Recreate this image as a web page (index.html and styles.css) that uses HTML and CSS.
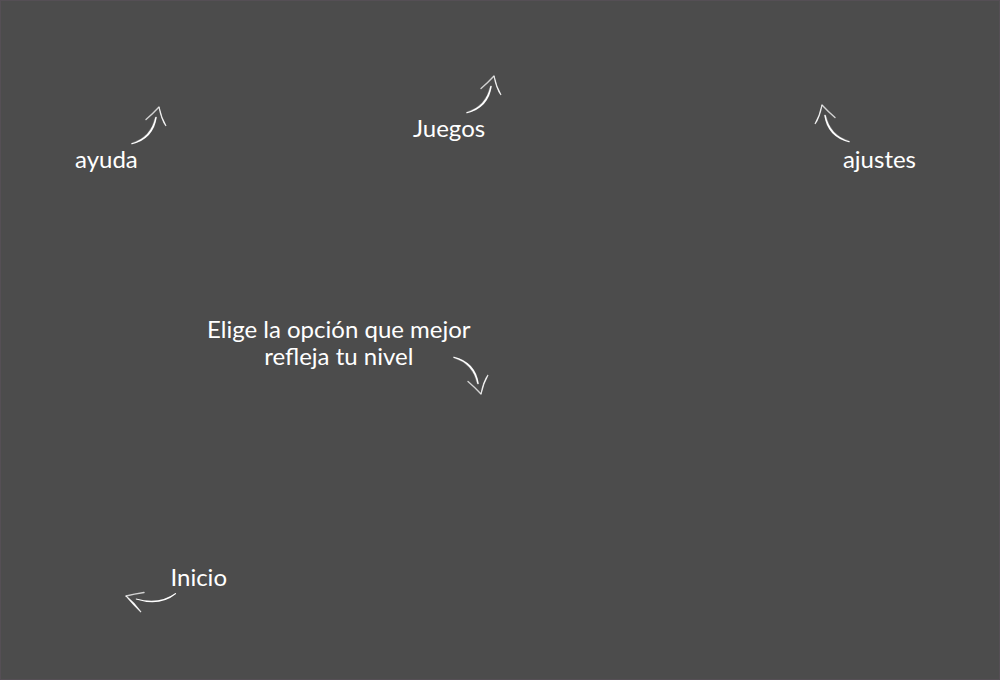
FILE: index.html
```html
<!DOCTYPE html>
<html lang="es">
<head>
<meta charset="utf-8">
<meta name="viewport" content="width=device-width, initial-scale=1">
<title>Guía</title>
<link rel="stylesheet" href="styles.css">
</head>
<body>
<svg class="symbols" aria-hidden="true">
  <symbol id="arrow" viewBox="0 0 36 39">
    <path d="M.5 37.200Q20 31.500 24.300 11.200Q25 10.500 25.700 11.200Q22.500 33 .8 38.200Q0 38 .5 37.200Z" fill="#fff" stroke="#fff" stroke-width=".2"/>
    <path d="M28 1Q22 7.500 15 13.500" fill="none" stroke="#fff" stroke-width="1.400" stroke-opacity=".75" stroke-linecap="round"/>
    <path d="M28 1Q30 11 35 20Q30.500 14 28 1Z" fill="#fff" stroke="#fff" stroke-width="1.200" stroke-opacity=".85"/>
  </symbol>
  <symbol id="arrow-left" viewBox="0 0 52 22">
    <path d="M11 7.400Q34 14 50.500 2Q51.500 2 51 3Q35 16 11 8.600Q10.500 8 11 7.400Z" fill="#fff"/>
    <path d="M1 5Q9 3 19 1.500" fill="none" stroke="#fff" stroke-width="1.400" stroke-opacity=".75" stroke-linecap="round"/>
    <path d="M1 5Q9.500 12 16 21Q8 13.500 1 5Z" fill="#fff" stroke="#fff" stroke-width="1.100" stroke-opacity=".85"/>
  </symbol>
</svg>
<main class="guide">
  <div class="guide-top">
    <div class="hint hint-help">
      <svg class="arrow" aria-hidden="true"><use href="#arrow"/></svg>
      <p class="label">ayuda</p>
    </div>
    <div class="hint hint-games">
      <svg class="arrow" aria-hidden="true"><use href="#arrow"/></svg>
      <p class="label">Juegos</p>
    </div>
    <div class="hint hint-settings">
      <svg class="arrow arrow-mirrored" aria-hidden="true"><use href="#arrow"/></svg>
      <p class="label">ajustes</p>
    </div>
  </div>
  <div class="hint-level">
    <p class="label">Elige la opción que mejor<br>refleja tu nivel</p>
    <svg class="arrow arrow-down" aria-hidden="true"><use href="#arrow"/></svg>
  </div>
  <div class="hint-home">
    <p class="label">Inicio</p>
    <svg class="arrow-home" aria-hidden="true"><use href="#arrow-left"/></svg>
  </div>
</main>
</body>
</html>
```
FILE: styles.css
```css
* {
  box-sizing: border-box;
}

body {
  margin: 0;
  background: #4c4c4c;
  color: #fff;
  font-family: Lato, "Liberation Sans", sans-serif;
}

.symbols {
  display: none;
}

.guide {
  display: flex;
  flex-direction: column;
  min-height: 100vh;
  padding: 74px 83px 66px 74px;
  border: 1px solid #554f55;
}

.guide-top {
  display: grid;
  grid-template-columns: 338fr 401fr auto;
  align-items: start;
}

.hint {
  display: flex;
  flex-direction: column;
  width: 92px;
}

.hint-games {
  width: 89px;
}

.hint-help,
.hint-settings {
  padding-top: 31px;
}

.hint-settings {
  width: 102px;
  align-items: flex-end;
}

.label {
  margin: 0;
  font-size: 24px;
  line-height: 27px;
}

.arrow {
  flex: none;
  align-self: flex-end;
  width: 36px;
  height: 39px;
}

.arrow-mirrored {
  align-self: flex-start;
  margin: -2px 0 2px;
  transform: scaleX(-1);
}

.arrow-down {
  transform: scaleY(-1);
}

.hint-level {
  display: flex;
  margin: 143px 0 0 132px;
  text-align: center;
}

.hint-level .arrow {
  margin: 41px 0 0 -18px;
}

.hint-home {
  display: flex;
  flex-direction: column;
  align-items: flex-end;
  align-self: flex-start;
  width: 102px;
  margin: auto 0 0 50px;
}

.arrow-home {
  width: 52px;
  height: 22px;
  margin: 1px 50px 0 0;
}
```
